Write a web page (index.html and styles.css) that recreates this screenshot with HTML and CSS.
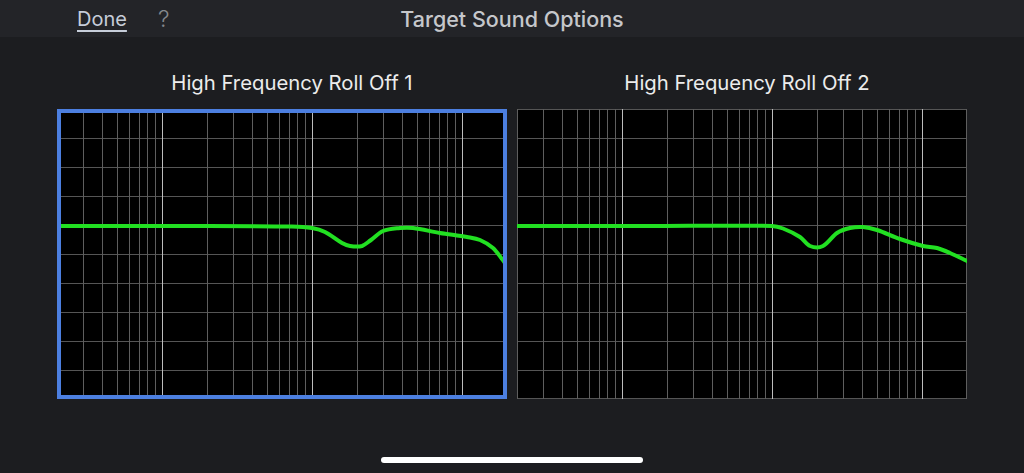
FILE: index.html
```html
<!DOCTYPE html>
<html lang="en">
<head>
    <meta charset="UTF-8">
    <meta name="viewport" content="width=device-width, initial-scale=1.0">
    <title>Target Sound Options</title>
    <link rel="stylesheet" href="styles.css">
</head>
<body>
    <header class="topbar">
        <div class="topbar-left">
            <a class="done" href="#">Done</a>
            <span class="help">?</span>
        </div>
        <h1 class="topbar-title">Target Sound Options</h1>
        <div></div>
    </header>
    <main class="options">
        <section class="option option-first">
            <h2>High Frequency Roll Off 1</h2>
            <div class="graph selected">
                <svg viewBox="0 0 450 290" width="450" height="290" data-curve="1"></svg>
            </div>
        </section>
        <section class="option option-second">
            <h2>High Frequency Roll Off 2</h2>
            <div class="graph">
                <svg viewBox="0 0 450 290" width="450" height="290" data-curve="2"></svg>
            </div>
        </section>
    </main>
    <div class="home-bar"></div>
    <script>
        const W = 450, H = 290;

        // points measured on the 20 Hz - 20 kHz log axis, y in px from top
        const curves = {
            1: [[0,117],[120,117],[235,117.5],[255,119],[268,123],[285,134],[293,137],[305,137],[314,131],[326,122],[343,119],[356,119],[383,124],[410,128],[423,131],[436,139],[445,150],[450,157]],
            2: [[0,117],[130,117],[255,117],[266,119.5],[283,128],[293,137],[306,137],[320,124],[333,119],[346,118],[360,121],[383,130],[406,137],[420,139],[433,144],[450,152]]
        };

        const xOf = f => W * Math.log10(f / 20) / 3;

        function gridMarkup() {
            let s = '';
            for (let i = 0; i <= 10; i++) {
                const y = Math.min(H - 0.5, Math.max(0.5, Math.round(i * H / 10) + 0.5));
                s += `<line class="h" x1="0" x2="${W}" y1="${y}" y2="${y}"/>`;
            }
            [10, 100, 1000, 10000].forEach(dec => {
                for (let m = 1; m <= 9; m++) {
                    const f = dec * m;
                    if (f < 20 || f > 20000) continue;
                    const x = Math.min(W - 0.5, Math.max(0.5, Math.round(xOf(f)) + 0.5));
                    const cls = (m === 1 && dec > 10) ? 'decade' : 'v';
                    s += `<line class="${cls}" x1="${x}" x2="${x}" y1="0" y2="${H}"/>`;
                }
            });
            return s;
        }

        // cubic hermite through points with increasing x
        function smoothPath(pts) {
            const r = n => n.toFixed(1);
            const slope = i => {
                const a = pts[Math.max(0, i - 1)], b = pts[Math.min(pts.length - 1, i + 1)];
                return (b[1] - a[1]) / (b[0] - a[0]);
            };
            let d = `M${r(pts[0][0])},${r(pts[0][1])}`;
            for (let i = 0; i < pts.length - 1; i++) {
                const p1 = pts[i], p2 = pts[i + 1], dx = (p2[0] - p1[0]) / 3;
                d += ` C${r(p1[0] + dx)},${r(p1[1] + slope(i) * dx)} ${r(p2[0] - dx)},${r(p2[1] - slope(i + 1) * dx)} ${r(p2[0])},${r(p2[1])}`;
            }
            return d;
        }

        document.querySelectorAll('.graph svg').forEach(svg => {
            const pts = curves[svg.dataset.curve];
            svg.innerHTML = `<g class="grid">${gridMarkup()}</g><path class="curve" d="${smoothPath(pts)}"/>`;
        });
    </script>
</body>
</html>
```

FILE: styles.css
```css
:root { --bg: #1c1d20; --bar: #232428; --accent: #4c7fe0; --curve: #22e022; }
body { margin: 0; background-color: var(--bg); color: #e6e6e6; font-family: Inter, "Liberation Sans", sans-serif; height: 473px; overflow: hidden; }
.topbar { display: grid; grid-template-columns: 1fr auto 1fr; align-items: center; height: 37px; background-color: var(--bar); }
.topbar-left { display: flex; align-items: center; gap: 31px; padding-left: 77px; }
.done { color: #c6cdd9; font-size: 20px; text-decoration: underline; text-decoration-thickness: 2px; text-underline-offset: 4px; }
.help { color: #85888d; font-size: 23px; font-weight: 300; }
.topbar-title { margin: 0; font-size: 21.5px; font-weight: 500; color: #c5c7cb; }
.options { display: grid; grid-template-columns: 450px 450px; gap: 10px; justify-content: center; padding-top: 34px; }
.option { display: flex; flex-direction: column; align-items: center; gap: 14px; }
.option h2 { margin: 0; font-size: 20.3px; line-height: 24px; font-weight: 400; color: #ececec; }
.option-first h2 { padding-left: 20px; }
.option-second h2 { padding-left: 10px; }
.graph { width: 450px; height: 290px; background-color: #000; }
.graph svg { display: block; }
.graph.selected { outline: 4px solid var(--accent); outline-offset: -4px; }
.grid line { stroke-width: 1; shape-rendering: crispEdges; }
.grid .h { stroke: #555; }
.grid .v { stroke: #5e5e5e; }
.grid .decade { stroke: #bdbdbd; }
.curve { fill: none; stroke: var(--curve); stroke-width: 4; stroke-linecap: round; stroke-linejoin: round; }
.home-bar { width: 262px; height: 6px; border-radius: 3px; background-color: #fff; margin: 58px auto 0; }
```
